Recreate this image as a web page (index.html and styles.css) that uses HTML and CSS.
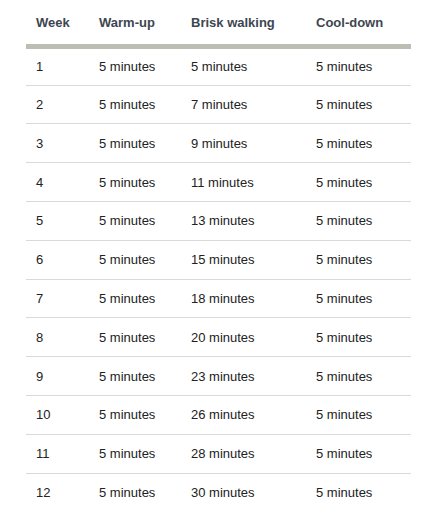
FILE: index.html
```html
<!DOCTYPE html>
<html lang="en">
<head>
    <meta charset="UTF-8">
    <meta name="viewport" content="width=device-width, initial-scale=1.0">
    <title>Walking plan</title>
    <link rel="stylesheet" href="styles.css">
</head>
<body>
    <div class="plan">
        <table class="plan-table">
            <thead>
                <tr>
                    <th class="col-week">Week</th>
                    <th class="col-warm">Warm-up</th>
                    <th class="col-brisk">Brisk walking</th>
                    <th class="col-cool">Cool-down</th>
                </tr>
            </thead>
            <tbody>
                <tr><td>1</td><td>5 minutes</td><td>5 minutes</td><td>5 minutes</td></tr>
                <tr><td>2</td><td>5 minutes</td><td>7 minutes</td><td>5 minutes</td></tr>
                <tr><td>3</td><td>5 minutes</td><td>9 minutes</td><td>5 minutes</td></tr>
                <tr><td>4</td><td>5 minutes</td><td>11 minutes</td><td>5 minutes</td></tr>
                <tr><td>5</td><td>5 minutes</td><td>13 minutes</td><td>5 minutes</td></tr>
                <tr><td>6</td><td>5 minutes</td><td>15 minutes</td><td>5 minutes</td></tr>
                <tr><td>7</td><td>5 minutes</td><td>18 minutes</td><td>5 minutes</td></tr>
                <tr><td>8</td><td>5 minutes</td><td>20 minutes</td><td>5 minutes</td></tr>
                <tr><td>9</td><td>5 minutes</td><td>23 minutes</td><td>5 minutes</td></tr>
                <tr><td>10</td><td>5 minutes</td><td>26 minutes</td><td>5 minutes</td></tr>
                <tr><td>11</td><td>5 minutes</td><td>28 minutes</td><td>5 minutes</td></tr>
                <tr><td>12</td><td>5 minutes</td><td>30 minutes</td><td>5 minutes</td></tr>
            </tbody>
        </table>
    </div>
</body>
</html>
```

FILE: styles.css
```css
* {
    margin: 0;
    padding: 0;
    box-sizing: border-box;
}

body {
    background-color: #ffffff;
    font-family: "Liberation Sans", Arial, sans-serif;
    font-size: 13px;
    color: #222222;
}

.plan {
    padding: 0 13px 0 26px;
}

.plan-table {
    width: 385px;
    border-collapse: collapse;
    table-layout: fixed;
}

.plan-table th {
    height: 46.3px;
    padding: 1px 10px 0;
    text-align: left;
    font-weight: bold;
    color: #3d4650;
    border-bottom: 5px solid #bdbdb3;
    vertical-align: middle;
}

.plan-table td {
    height: 38.8px;
    padding: 0 10px;
    border-bottom: 1px solid #d9d9d9;
    vertical-align: middle;
    white-space: nowrap;
}

.plan-table tbody tr:last-child td {
    border-bottom: none;
}

.col-week {
    width: 63px;
}

.col-warm {
    width: 92px;
}

.col-brisk {
    width: 125px;
}

.col-cool {
    width: 105px;
}
```
